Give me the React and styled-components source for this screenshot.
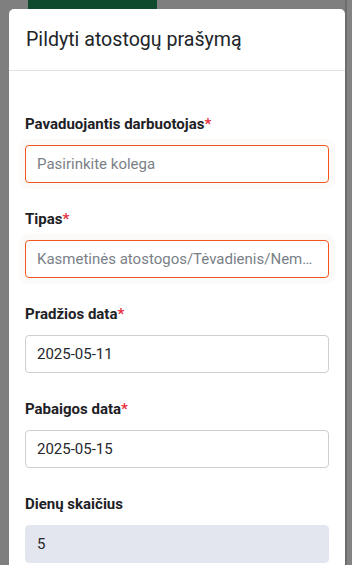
import React from "react";
import styled, { createGlobalStyle } from "styled-components";

const Global = createGlobalStyle`
  html, body { margin: 0; padding: 0; }
  body { font-family: Roboto, "Noto Sans", sans-serif; background: #7f7f7f; overflow: hidden; }
`;

const Page = styled.div`
  position: relative;
  width: 352px;
  height: 565px;
  overflow: hidden;
  background: #7f7f7f;
`;

const BgButton = styled.div`
  position: absolute;
  left: 28px;
  top: -20px;
  width: 129px;
  height: 30px;
  background: #0e4a2d;
`;

const ScrollStrip = styled.div`
  position: absolute;
  right: 0;
  top: 0;
  width: 7px;
  height: 565px;
  border-left: 2px solid #6d6d6d;
  box-sizing: border-box;
  background: #838383;
`;

const Modal = styled.div`
  position: absolute;
  left: 9px;
  top: 9px;
  width: 336px;
  min-height: 600px;
  background: #fff;
  border-radius: 5px 5px 0 0;
`;

const Header = styled.div`
  height: 62px;
  box-sizing: border-box;
  border-bottom: 1px solid #e2e2e2;
  display: flex;
  align-items: center;
  padding: 0 17px;
`;

const Title = styled.h2`
  margin: 0;
  font-size: 19.6px;
  font-weight: 400;
  color: #212529;
`;

const Body = styled.div`
  padding: 42px 16px 0 16px;
  display: flex;
  flex-direction: column;
  gap: 25px;
`;

const Field = styled.div`
  display: flex;
  flex-direction: column;
  gap: 10px;
`;

const Label = styled.label`
  font-size: 15px;
  font-weight: 700;
  line-height: 22px;
  color: #1e2125;
`;

const Req = styled.span`
  color: #e8313f;
`;

const Input = styled.div`
  height: 38px;
  box-sizing: border-box;
  border: 1px solid ${(p) => (p.$error ? "#f0561d" : p.$disabled ? "#e3e6ee" : "#cfcfcf")};
  background: ${(p) => (p.$disabled ? "#e3e6ee" : "#fff")};
  border-radius: 4px;
  box-shadow: ${(p) => (p.$error ? "0 0 0 6px rgba(240, 230, 220, 0.18)" : "none")};
  display: flex;
  align-items: center;
  padding: 0 11px 0 11px;
  font-size: 15px;
  color: ${(p) => (p.$placeholder ? "#7a7f87" : "#24272b")};
  min-width: 0;
`;

const InputText = styled.span`
  overflow: hidden;
  text-overflow: ellipsis;
  white-space: nowrap;
  display: block;
  width: 100%;
`;

export default function App() {
  const fields = [
    { label: "Pavaduojantis darbuotojas", req: true, value: "Pasirinkite kolega", placeholder: true, error: true },
    { label: "Tipas", req: true, value: "Kasmetinės atostogos/Tėvadienis/Nemokamos atostogos", placeholder: true, error: true },
    { label: "Pradžios data", req: true, value: "2025-05-11" },
    { label: "Pabaigos data", req: true, value: "2025-05-15" },
    { label: "Dienų skaičius", value: "5", disabled: true },
  ];
  return (
    <Page>
      <Global />
      <BgButton />
      <ScrollStrip />
      <Modal>
        <Header>
          <Title>Pildyti atostogų prašymą</Title>
        </Header>
        <Body>
          {fields.map((f) => (
            <Field key={f.label}>
              <Label>
                {f.label}
                {f.req && <Req>*</Req>}
              </Label>
              <Input $error={f.error} $placeholder={f.placeholder} $disabled={f.disabled}>
                <InputText>{f.value}</InputText>
              </Input>
            </Field>
          ))}
        </Body>
      </Modal>
    </Page>
  );
}
